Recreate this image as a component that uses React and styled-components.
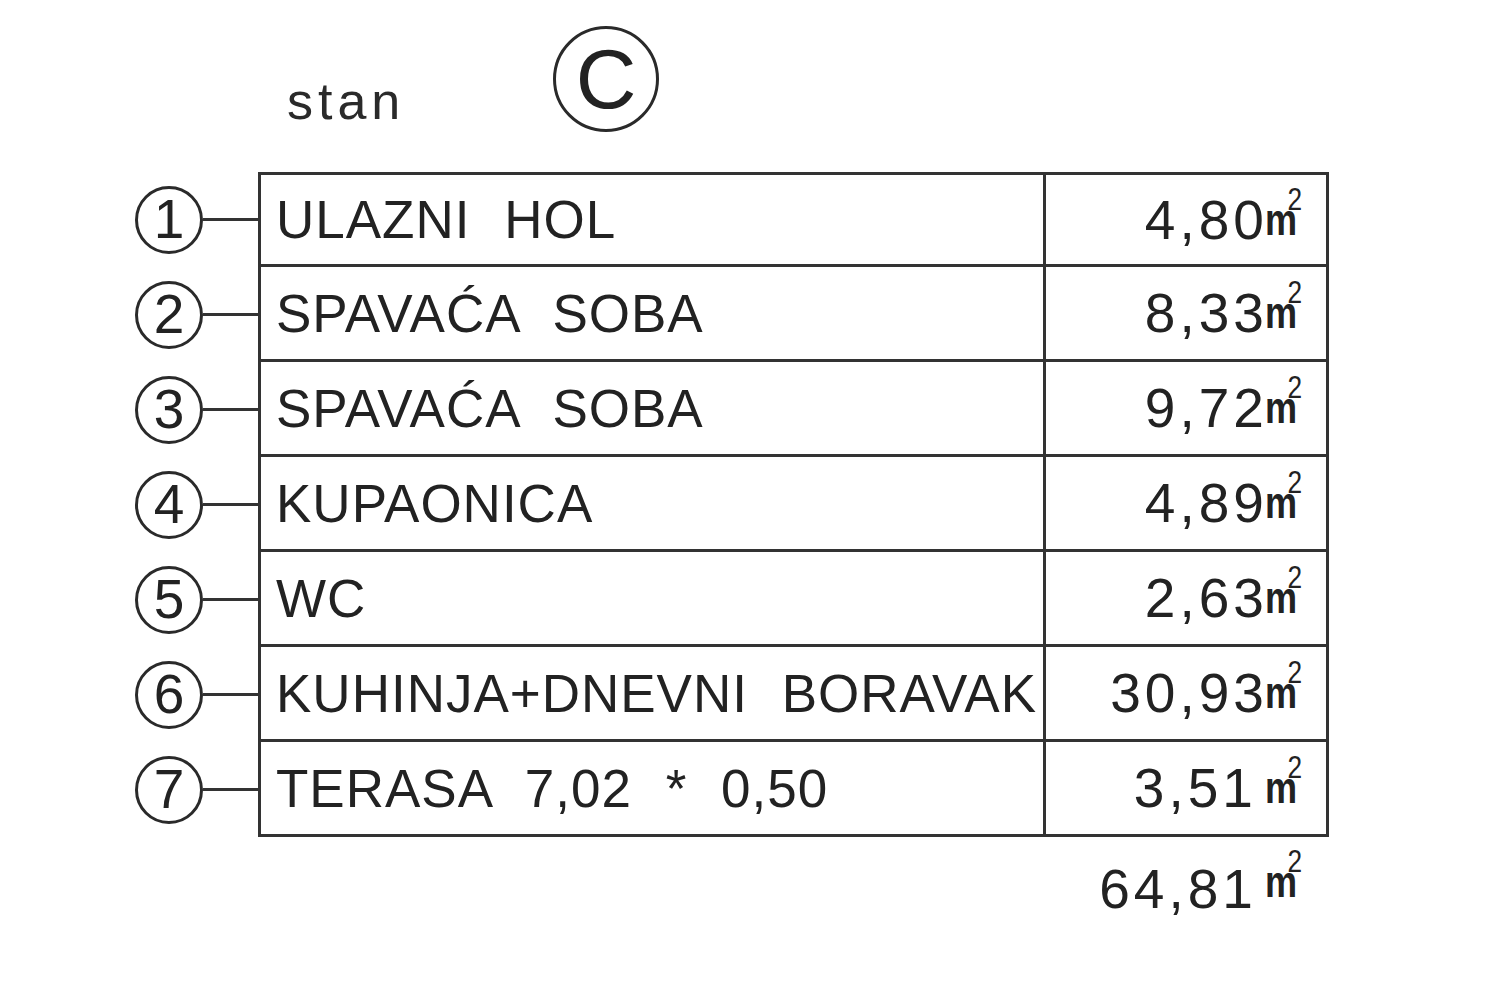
import React from "react";
import styled, { createGlobalStyle } from "styled-components";

const GlobalStyle = createGlobalStyle`
  html, body {
    margin: 0;
    padding: 0;
    background: #fff;
  }
  body {
    font-family: "Liberation Sans", Arial, sans-serif;
    color: #222;
  }
`;

const Sheet = styled.div`
  width: 1500px;
  height: 1008px;
  padding: 26px 0 0 135px;
  box-sizing: border-box;
  overflow: hidden;
`;

const Header = styled.div`
  display: flex;
  align-items: center;
  height: 106px;
  padding-left: 152px;
  margin-bottom: 40px;
`;

const Title = styled.span`
  width: 266px;
  font-size: 52px;
  letter-spacing: 5px;
  margin-top: 44px;
  color: #2a2a2a;
`;

const Circle = styled.span`
  display: inline-flex;
  align-items: center;
  justify-content: center;
  box-sizing: border-box;
  width: ${(p) => p.size}px;
  height: ${(p) => p.size}px;
  border: 3px solid #2a2a2a;
  border-radius: 50%;
  font-size: ${(p) => p.fontSize}px;
  line-height: 1;
  color: #222;
  flex-shrink: 0;
`;

const Rows = styled.div`
  display: flex;
  flex-direction: column;
`;

const Row = styled.div`
  display: flex;
  height: 95px;
`;

const Marker = styled.div`
  display: flex;
  align-items: center;
  width: 123px;
  flex-shrink: 0;
`;

const Leader = styled.span`
  flex: 1;
  height: 3px;
  background: #333;
`;

const Cell = styled.div`
  display: flex;
  align-items: center;
  box-sizing: border-box;
  height: 100%;
  border-bottom: 3px solid #333;
  border-right: 3px solid #333;
  border-top: ${(p) => (p.first ? "3px solid #333" : "none")};
  font-size: 53px;
  white-space: pre;
  color: #222;
`;

const NameCell = styled(Cell)`
  width: 788px;
  border-left: 3px solid #333;
  padding-left: 15px;
  letter-spacing: 1px;
  word-spacing: 18px;
`;

const AreaCell = styled(Cell)`
  width: 283px;
  justify-content: flex-end;
  padding-right: 26px;
  font-size: 55px;
  letter-spacing: 4px;
`;

const Total = styled.div`
  display: flex;
  justify-content: flex-end;
  width: 1194px;
  padding-right: 29px;
  box-sizing: border-box;
  margin-top: 20px;
  font-size: 55px;
  letter-spacing: 4px;
  color: #222;
`;

const Unit = styled.span`
  display: inline-block;
  position: relative;
  letter-spacing: 0;
  margin-left: ${(p) => (p.spaced ? 8 : -3)}px;
  margin-right: -4px;
  font-size: 44px;
  font-weight: 700;
  transform: scaleX(0.82);
  transform-origin: left;

  sup {
    position: absolute;
    right: -6px;
    top: -12px;
    font-size: 32px;
    line-height: 1;
    font-weight: 400;
  }
`;

const rooms = [
  { name: "ULAZNI HOL", area: "4,80" },
  { name: "SPAVAĆA SOBA", area: "8,33" },
  { name: "SPAVAĆA SOBA", area: "9,72" },
  { name: "KUPAONICA", area: "4,89" },
  { name: "WC", area: "2,63" },
  { name: "KUHINJA+DNEVNI BORAVAK", area: "30,93" },
  { name: "TERASA 7,02 * 0,50", area: "3,51", spaced: true },
];

const Area = ({ value, spaced }) => (
  <>
    {value}
    <Unit spaced={spaced}>
      m<sup>2</sup>
    </Unit>
  </>
);

export default function App() {
  return (
    <>
      <GlobalStyle />
      <Sheet>
        <Header>
          <Title>stan</Title>
          <Circle size={106} fontSize={84}>
            C
          </Circle>
        </Header>
        <Rows>
          {rooms.map((r, i) => (
            <Row key={i}>
              <Marker>
                <Circle size={68} fontSize={55}>
                  {i + 1}
                </Circle>
                <Leader />
              </Marker>
              <NameCell first={i === 0}>{r.name}</NameCell>
              <AreaCell first={i === 0}>
                <Area value={r.area} spaced={r.spaced} />
              </AreaCell>
            </Row>
          ))}
        </Rows>
        <Total>
          <Area value="64,81" spaced />
        </Total>
      </Sheet>
    </>
  );
}
